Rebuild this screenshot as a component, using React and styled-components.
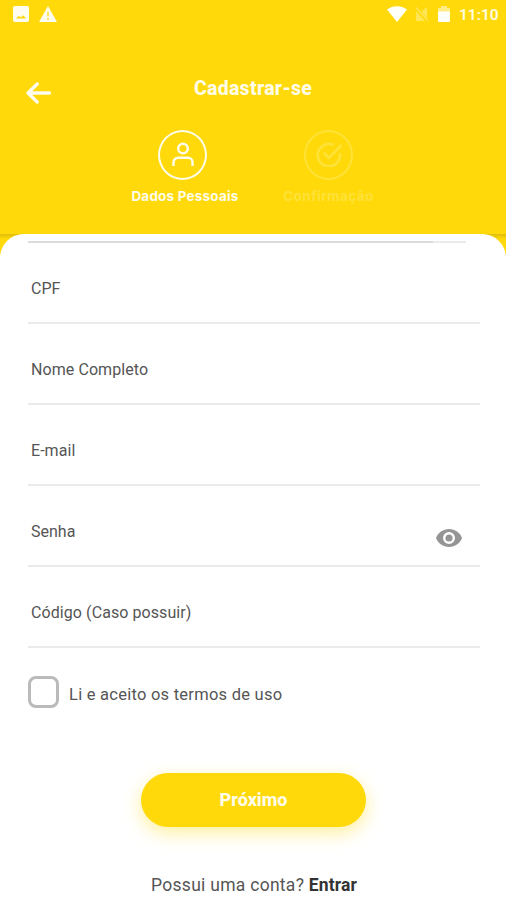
import styled, { createGlobalStyle, ThemeProvider } from "styled-components"

const theme = {
  yellow: "#ffd90a",
  gray: "#555555",
  line: "#ebebeb",
}

const fields = [
  { label: "CPF", spacing: "0" },
  { label: "Nome Completo", spacing: "0.08px" },
  { label: "E-mail", spacing: "0.05px" },
  { label: "Senha", spacing: "0", secret: true },
  { label: "Código (Caso possuir)", spacing: "0.08px" },
]

const StatusBar = () => (
  <StatusBarContainer>
    <StatusGroup gap="10px">
      <svg width="16" height="16" viewBox="0 0 16 16">
        <rect width="16" height="16" rx="2" fill="#fffdf0" />
        <path d="M2.8 12.5l3-2.6 2 1.4 2.4-2 3 3.2z" fill="#ffd90a" />
      </svg>
      <svg width="18" height="16" viewBox="0 0 18 16">
        <path d="M9 0l9 16H0z" fill="#fffdf0" />
        <path d="M9 5.5v5M9 12v2" stroke="#ffe25a" strokeWidth="1.8" />
      </svg>
    </StatusGroup>
    <StatusGroup gap="8px">
      <svg width="20" height="16" viewBox="0 0 20 16">
        <path d="M0 3.6C5.6-.9 14.4-.9 20 3.6L10 16z" fill="#fffffa" />
      </svg>
      <svg width="14" height="16" viewBox="0 0 14 16">
        <path d="M12 1v11L6.5 5.500zM1 5v10h9z" fill="#ffe656" />
        <path d="M1 1.500l12 13" stroke="#ffe656" strokeWidth="1.5" />
      </svg>
      <svg width="14" height="16" viewBox="0 0 14 16">
        <path d="M4 0h6v2h3v4H1V2h3z" fill="#ffec85" />
        <path d="M1 5.5h12V15a1 1 0 0 1-1 1H2a1 1 0 0 1-1-1z" fill="#fffffa" />
      </svg>
      <Clock>11:10</Clock>
    </StatusGroup>
  </StatusBarContainer>
)

const UserIcon = () => (
  <svg width="24" height="26" viewBox="0 0 24 26" fill="none" stroke="currentColor" strokeWidth="2.5">
    <circle cx="12" cy="7.5" r="4.8" />
    <path d="M2.5 25v-3.7a4.5 4.5 0 0 1 4.5-4.5h10a4.500 4.500 0 0 1 4.500 4.500V25" />
  </svg>
)

const CheckIcon = () => (
  <svg width="28" height="26" viewBox="0 0 28 26" fill="none" stroke="currentColor" strokeWidth="2.6">
    <path d="M18.6 4A11.200 11.200 0 1 0 24.900 12" />
    <path d="M9 12l5 5L26.500 4" />
  </svg>
)

const EyeIcon = () => (
  <svg width="26" height="18" viewBox="0 0 26 18">
    <path d="M13 0C7.1 0 2.1 3.7 0 9c2.1 5.3 7.1 9 13 9s10.9-3.7 13-9C23.9 3.7 18.9 0 13 0z" fill="#959595" />
    <circle cx="13" cy="9" r="4.8" fill="#959595" stroke="#fff" strokeWidth="2.4" />
  </svg>
)

const Step = ({ icon, label, color, spacing }) => (
  <StepContainer color={color}>
    <StepCircle>{icon}</StepCircle>
    <StepLabel spacing={spacing}>{label}</StepLabel>
  </StepContainer>
)

const Field = ({ label, spacing, secret }) => (
  <FieldContainer>
    <FieldLabel spacing={spacing}>{label}</FieldLabel>
    {secret && (
      <EyeButton type="button" aria-label="Mostrar senha">
        <EyeIcon />
      </EyeButton>
    )}
  </FieldContainer>
)

export default function App() {
  return (
    <ThemeProvider theme={theme}>
      <GlobalStyle />
      <Screen>
        <Header>
          <StatusBar />
          <TitleBar>
            <BackButton aria-label="Voltar">
              <svg width="26" height="22" viewBox="0 0 26 22" fill="none" stroke="currentColor" strokeWidth="3.3" strokeLinecap="round" strokeLinejoin="round">
                <path d="M11.2 2L2 11l9.2 9M2.5 11h21" />
              </svg>
            </BackButton>
            <Title>Cadastrar-se</Title>
          </TitleBar>
          <Steps>
            <Step icon={<UserIcon />} label="Dados Pessoais" color="#fffce8" spacing="0.2px" />
            <Step icon={<CheckIcon />} label="Confirmação" color="#ffe238" spacing="0.45px" />
          </Steps>
        </Header>
        <SheetBackground>
          <Sheet>
            <PreviousLine />
            {fields.map((field) => (
              <Field key={field.label} {...field} />
            ))}
            <Terms>
              <Checkbox />
              <TermsText>Li e aceito os termos de uso</TermsText>
            </Terms>
            <NextButton type="button">Próximo</NextButton>
            <Footer>
              Possui uma conta? <strong>Entrar</strong>
            </Footer>
          </Sheet>
        </SheetBackground>
      </Screen>
    </ThemeProvider>
  )
}

const GlobalStyle = createGlobalStyle`
  * {
    box-sizing: border-box;
  }

  body {
    margin: 0;
    font-family: Roboto, "Liberation Sans", sans-serif;
  }

  svg {
    display: block;
  }
`

const Screen = styled.div`
  background-color: white;

  display: flex;
  flex-direction: column;

  width: 506px;
  height: 900px;
  overflow: hidden;
`

const Header = styled.header`
  background-color: ${(props) => props.theme.yellow};

  flex: none;
  height: 234px;
`

const StatusBarContainer = styled.div`
  display: flex;
  align-items: center;
  justify-content: space-between;

  height: 28px;
  padding: 0 8px 0 13px;
`

const StatusGroup = styled.div`
  display: flex;
  align-items: center;
  gap: ${(props) => props.gap};
`

const Clock = styled.span`
  color: #fffce0;

  width: 39px;
  padding-top: 2px;

  font-size: 15.5px;
  font-weight: 600;
  line-height: 20px;
  white-space: nowrap;
`

const TitleBar = styled.div`
  display: grid;
  grid-template-columns: 26px 1fr 26px;
  align-items: start;

  height: 102px;
  padding: 48px 26px 0;
`

const BackButton = styled.button`
  background: none;
  color: #fffdf0;

  margin: 6px 0 0;
  padding: 0;

  border: none;

  cursor: pointer;
`

const Title = styled.h1`
  color: #fffce8;

  margin: 1px 0 0;

  font-size: 19.5px;
  font-weight: 800;
  line-height: 24px;
  letter-spacing: 0.3px;
  text-align: center;
`

const Steps = styled.div`
  display: flex;
  justify-content: center;

  padding-left: 5px;
`

const StepContainer = styled.div`
  color: ${(props) => props.color};

  display: flex;
  flex-direction: column;
  align-items: center;

  width: 146px;
`

const StepCircle = styled.div`
  display: flex;
  align-items: center;
  justify-content: center;

  width: 49px;
  height: 50px;
  padding-bottom: 3px;

  border: 2px solid currentColor;
  border-radius: 50%;
`

const StepLabel = styled.span`
  margin-top: 7px;
  padding-left: 5px;

  font-family: Inter, Roboto, sans-serif;
  font-size: 13.5px;
  font-weight: 700;
  line-height: 18px;
  letter-spacing: ${(props) => props.spacing};
  white-space: nowrap;

  ${StepContainer} + ${StepContainer} & {
    padding-left: 0;
  }
`

const SheetBackground = styled.div`
  background: linear-gradient(#dfbd08, ${(props) => props.theme.yellow} 5px) top / 100% 30px no-repeat;

  flex: 1;
`

const Sheet = styled.form`
  background-color: white;

  display: flex;
  flex-direction: column;

  height: 666px;
  padding: 7px 26px 0 28px;

  border-radius: 24px 24px 0 0;
`

const PreviousLine = styled.div`
  background: linear-gradient(to right, #dcdcdc 405px, ${(props) => props.theme.line} 405px);

  width: 438px;
  height: 2px;
`

const FieldContainer = styled.div`
  display: flex;
  align-items: start;
  justify-content: space-between;

  height: 81px;
  padding: 36px 18px 0 3px;

  border-bottom: 2px solid ${(props) => props.theme.line};
`

const FieldLabel = styled.label`
  color: ${(props) => props.theme.gray};

  font-size: 16px;
  line-height: 20px;
  letter-spacing: ${(props) => props.spacing};
`

const EyeButton = styled.button`
  background: none;

  margin-top: 7px;
  padding: 0;

  border: none;

  cursor: pointer;
`

const Terms = styled.div`
  display: flex;
  align-items: center;
  gap: 10px;

  margin-top: 28px;
`

const Checkbox = styled.span`
  width: 31px;
  height: 32px;

  border: 3px solid #bababa;
  border-radius: 8px;
`

const TermsText = styled.span`
  color: ${(props) => props.theme.gray};

  padding-top: 5px;

  font-size: 16.5px;
  line-height: 20px;
  letter-spacing: 0.25px;
`

const NextButton = styled.button`
  background-color: ${(props) => props.theme.yellow};
  color: #fffce8;

  width: 225px;
  height: 54px;
  margin: 65px 0 0 113px;
  padding: 0 0 1px;

  border: none;
  border-radius: 27px;
  box-shadow: 0 6px 18px rgba(255, 217, 10, 0.4);

  font-family: inherit;
  font-size: 18px;
  font-weight: 800;

  cursor: pointer;
`

const Footer = styled.p`
  color: ${(props) => props.theme.gray};

  margin: 47px 0 0;

  font-size: 17.5px;
  line-height: 22px;
  letter-spacing: 0.28px;
  text-align: center;

  strong {
    color: #333333;
    letter-spacing: 0.1px;
  }
`
